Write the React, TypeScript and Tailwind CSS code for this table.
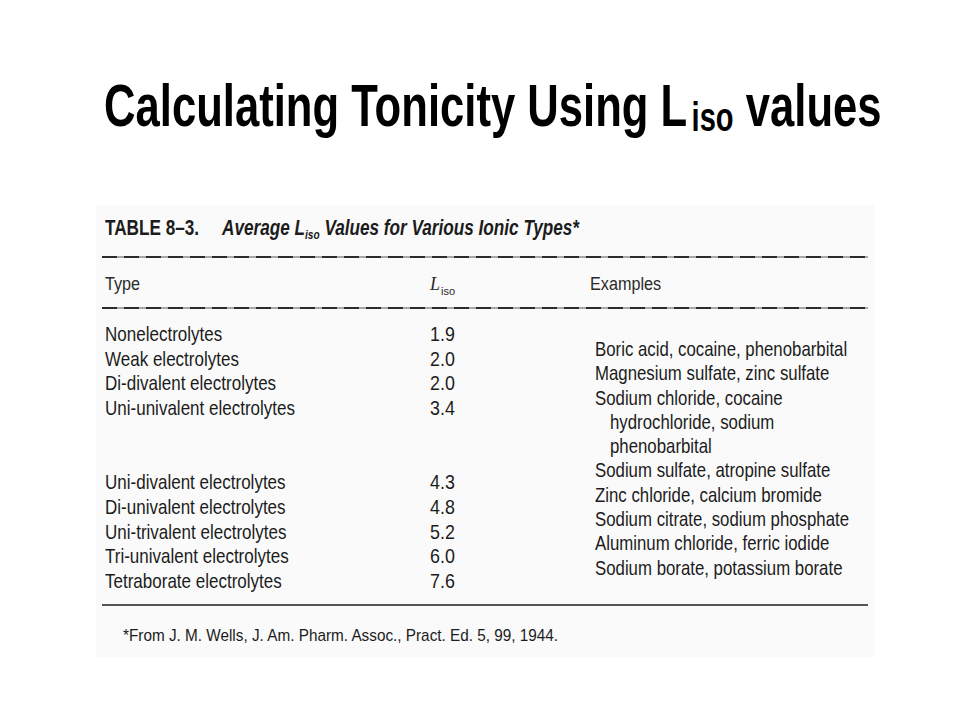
import React from "react";

const types: (string | null)[] = [
  "Nonelectrolytes",
  "Weak electrolytes",
  "Di-divalent electrolytes",
  "Uni-univalent electrolytes",
  null,
  null,
  "Uni-divalent electrolytes",
  "Di-univalent electrolytes",
  "Uni-trivalent electrolytes",
  "Tri-univalent electrolytes",
  "Tetraborate electrolytes",
];
const values: (string | null)[] = ["1.9", "2.0", "2.0", "3.4", null, null, "4.3", "4.8", "5.2", "6.0", "7.6"];

const examples: { t: string; indent?: boolean }[] = [
  { t: "Boric acid, cocaine, phenobarbital" },
  { t: "Magnesium sulfate, zinc sulfate" },
  { t: "Sodium chloride, cocaine" },
  { t: "hydrochloride, sodium", indent: true },
  { t: "phenobarbital", indent: true },
  { t: "Sodium sulfate, atropine sulfate" },
  { t: "Zinc chloride, calcium bromide" },
  { t: "Sodium citrate, sodium phosphate" },
  { t: "Aluminum chloride, ferric iodide" },
  { t: "Sodium borate, potassium borate" },
];

function Dashed() {
  return (
    <div className="w-[766px] h-[2px] bg-[repeating-linear-gradient(90deg,#2b2b2b_0px,#2b2b2b_15px,#a8a8a8_15px,#a8a8a8_22px)]" />
  );
}

export default function App() {
  return (
    <div className="w-[960px] h-[720px] bg-white overflow-hidden font-['Liberation_Sans',Arial,sans-serif] text-black">
      {/* Title */}
      <div className="pt-[76px] pl-[104px] h-[136px]">
        <h1 className="inline-block origin-left scale-x-[0.727] whitespace-nowrap text-[60px] leading-[60px] font-bold h-[60px]">
          Calculating Tonicity Using L
          <span className="text-[40px] leading-none align-[-5px] ml-[6px]">iso</span> values
        </h1>
      </div>

      {/* Scanned table */}
      <div className="mt-[69px] ml-[96px] w-[778px] h-[452px] bg-[#fafafa] pl-[6px] pt-[12px] text-[#1c1c1c]">
        <div className="ml-[3px] h-[22px] text-[22px] leading-[22px] font-bold whitespace-nowrap">
          <span className="inline-block origin-left scale-x-[0.78]">
            <span className="inline-block w-[150px]">TABLE 8–3.</span>
            <span className="italic">
              Average L<span className="text-[13px] align-[-4px]">iso</span> Values for Various Ionic Types*
            </span>
          </span>
        </div>

        <div className="mt-[17px]">
          <Dashed />
        </div>

        <div className="mt-[17px] ml-[3px] h-[18px] flex text-[18px] leading-[18px] text-[#2a2a2a] whitespace-nowrap">
          <div className="w-[325px] shrink-0">
            <span className="inline-block origin-left scale-x-[0.9]">Type</span>
          </div>
          <div className="w-[160px] shrink-0 font-['Liberation_Serif',serif] italic">
            L<span className="text-[11px] not-italic font-['Liberation_Sans',sans-serif] align-[-5px] ml-[1px]">iso</span>
          </div>
          <div className="shrink-0">
            <span className="inline-block origin-left scale-x-[0.9]">Examples</span>
          </div>
        </div>

        <div className="mt-[14px]">
          <Dashed />
        </div>

        <div className="mt-[13px] ml-[3px] flex text-[21px] whitespace-nowrap">
          <div className="w-[325px] shrink-0 leading-[24.7px]">
            {types.map((t, i) => (
              <div key={i} className="h-[24.7px]">
                {t && <span className="inline-block origin-left scale-x-[0.81]">{t}</span>}
              </div>
            ))}
          </div>
          <div className="w-[165px] shrink-0 leading-[24.7px]">
            {values.map((v, i) => (
              <div key={i} className="h-[24.7px]">
                {v && <span className="inline-block origin-left scale-x-[0.85]">{v}</span>}
              </div>
            ))}
          </div>
          <div className="shrink-0 pt-[15px] leading-[24.3px]">
            {examples.map((e, i) => (
              <div key={i} className={`h-[24.3px] ${e.indent ? "pl-[15px]" : ""}`}>
                <span className="inline-block origin-left scale-x-[0.8]">{e.t}</span>
              </div>
            ))}
          </div>
        </div>

        <div className="mt-[10px] w-[766px] h-[2px] bg-[#555]" />

        <div className="mt-[21px] ml-[21px] text-[17px] leading-[17px] whitespace-nowrap">
          <span className="inline-block origin-left scale-x-[0.9]">
            *From J. M. Wells, J. Am. Pharm. Assoc., Pract. Ed. 5, 99, 1944.
          </span>
        </div>
      </div>
    </div>
  );
}
